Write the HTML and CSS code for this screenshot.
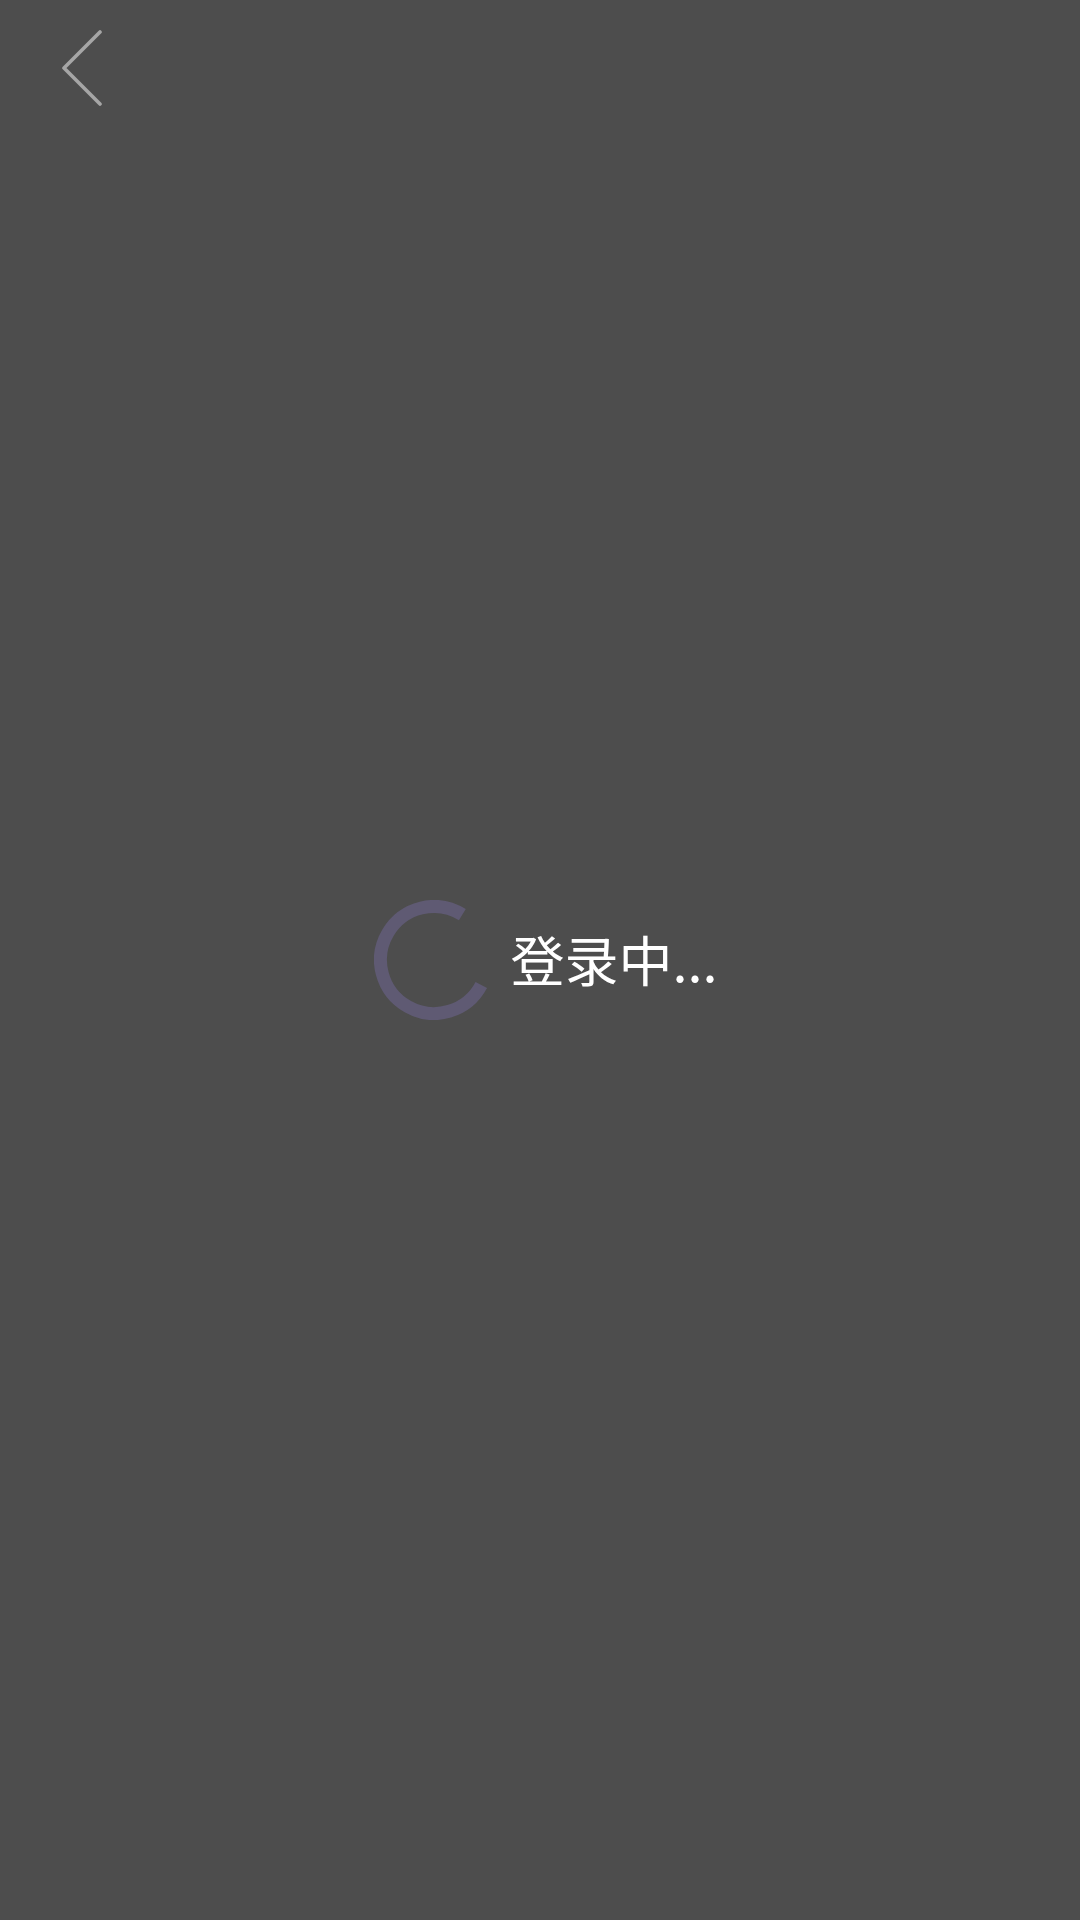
FILE: index.html
```html
<!DOCTYPE html>
<html lang="zh-CN">
<head>
  <meta charset="UTF-8">
  <title>登录中</title>
  <link rel="stylesheet" href="styles.css">
</head>
<body>
  <div class="page">
    <div class="top-bar">
      <svg class="back-icon" width="44" height="80" viewBox="0 0 44 80">
        <path d="M38 4 L2 40 L38 76" fill="none" stroke="#a6a6a6" stroke-width="3.6" stroke-linecap="round" stroke-linejoin="round"/>
      </svg>
    </div>
    <div class="loading">
      <svg class="spinner" width="120" height="120" viewBox="0 0 120 120">
        <path d="M88.35 14.63 A53.5 53.5 0 1 0 107.3 85" fill="none" stroke="#5f5a73" stroke-width="13"/>
      </svg>
      <span class="loading-text">登录中...</span>
    </div>
  </div>
</body>
</html>
```

FILE: styles.css
```css
body {
  margin: 0;
  padding: 0;
  background-color: #4d4d4d;
}

.page {
  height: 1920px;
  display: flex;
  flex-direction: column;
}

.top-bar {
  height: 136px;
  padding: 28px 0 0 62px;
  box-sizing: border-box;
}

.back-icon {
  display: block;
}

.loading {
  flex: 1;
  display: flex;
  align-items: center;
  justify-content: center;
  gap: 16px;
  padding-bottom: 136px;
  padding-left: 12px;
}

.loading-text {
  color: #fff;
  font-family: "Noto Sans CJK SC", sans-serif;
  font-size: 54px;
  line-height: 1;
  margin-bottom: 2px;
}
```
